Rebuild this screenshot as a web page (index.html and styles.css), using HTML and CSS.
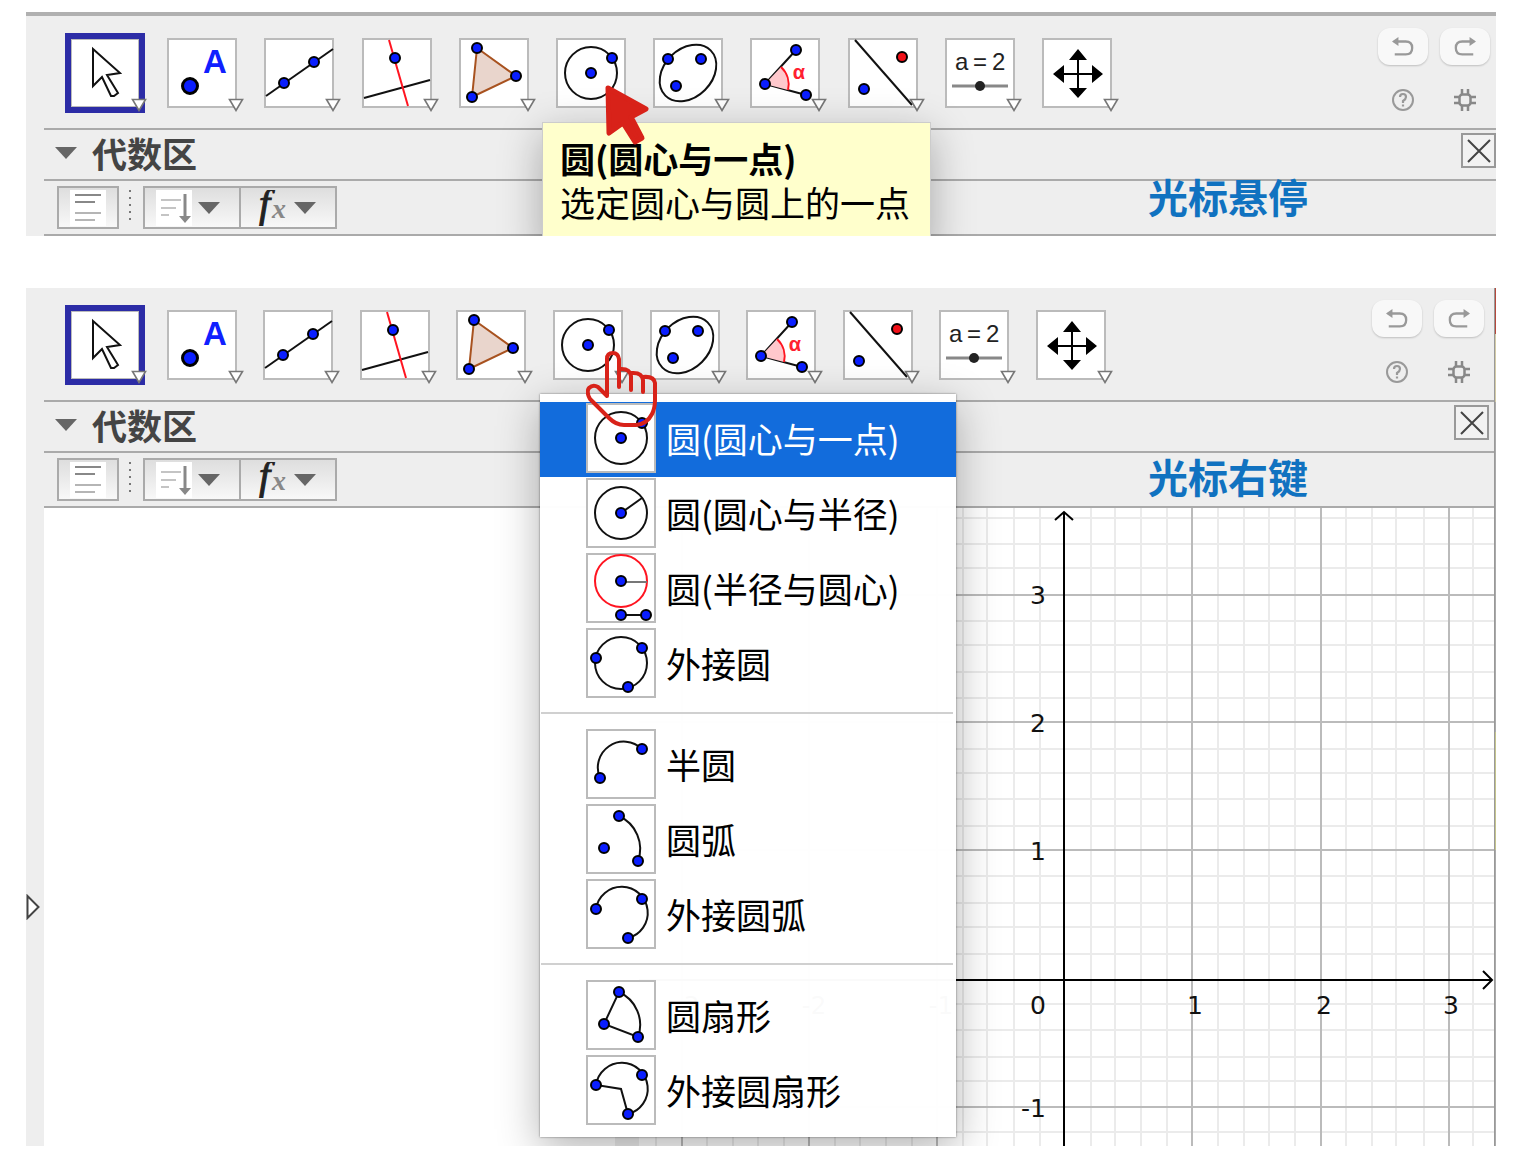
FILE: index.html
```html
<!DOCTYPE html>
<html lang="zh-CN">
<head>
<meta charset="utf-8">
<title>GeoGebra 工具栏</title>
<link rel="stylesheet" href="styles.css">
</head>
<body>
<svg class="sprite" aria-hidden="true">
  <symbol id="more" viewBox="0 0 16 14"><path d="M1.500 1.500h13L8 12.500z" fill="#fff" stroke="#777" stroke-width="1.600"/></symbol>
  <symbol id="i-move" viewBox="0 0 70 70"><path class="ln" d="M23 11 50 35 37 37 48 55 44 58H41L32 39 23 48z"/></symbol>
  <symbol id="i-point" viewBox="0 0 70 70"><circle cx="23" cy="48" r="7.500" fill="#0a1eff" stroke="#000" stroke-width="3"/><text class="glyph-a" x="48" y="35">A</text></symbol>
  <symbol id="i-line" viewBox="0 0 70 70"><path class="ln" d="M2 58 69 11"/><circle class="pt" cx="20" cy="45" r="5"/><circle class="pt" cx="50" cy="24" r="5"/></symbol>
  <symbol id="i-perp" viewBox="0 0 70 70"><path class="ln" d="M2 60 68 42"/><path class="ln red" d="M27 2 46 68"/><circle class="pt" cx="33" cy="20" r="5"/></symbol>
  <symbol id="i-poly" viewBox="0 0 70 70"><path d="M18 10 57 38 13 59z" fill="#e9d5cc" stroke="#a8521f" stroke-width="2"/><circle class="pt" cx="18" cy="10" r="5"/><circle class="pt" cx="57" cy="38" r="5"/><circle class="pt" cx="13" cy="59" r="5"/></symbol>
  <symbol id="i-circle" viewBox="0 0 70 70"><circle class="ln" cx="35" cy="35" r="26"/><circle class="pt" cx="35" cy="35" r="5"/><circle class="pt" cx="56" cy="20" r="5"/></symbol>
  <symbol id="i-conic" viewBox="0 0 70 70"><ellipse class="ln" cx="35" cy="35" rx="32" ry="24" transform="rotate(-45 35 35)"/><circle class="pt" cx="15" cy="21" r="5"/><circle class="pt" cx="48" cy="21" r="5"/><circle class="pt" cx="23" cy="48" r="5"/></symbol>
  <symbol id="i-angle" viewBox="0 0 70 70"><path class="ln" d="M46 12 15 46 56 57"/><path d="M15 46 31 29A24 24 0 0 1 38 52z" fill="#ffc8cc"/><path class="ln red" d="M31 29A24 24 0 0 1 38 52"/><circle class="pt" cx="15" cy="46" r="5"/><circle class="pt" cx="46" cy="12" r="5"/><circle class="pt" cx="56" cy="57" r="5"/><text class="glyph-alpha" x="49" y="41">α</text></symbol>
  <symbol id="i-mirror" viewBox="0 0 70 70"><path class="ln" d="M7 2 64 67"/><circle class="pt" cx="16" cy="51" r="5"/><circle class="pt pt-red" cx="54" cy="19" r="5"/></symbol>
  <symbol id="i-slider" viewBox="0 0 70 70"><text class="glyph-eq" x="10" y="32">a</text><text class="glyph-eq" x="28" y="32">=</text><text class="glyph-eq" x="47" y="32">2</text><path d="M7 48H63" stroke="#888" stroke-width="3"/><circle cx="35" cy="48" r="5" fill="#222"/></symbol>
  <symbol id="i-pan" viewBox="0 0 70 70"><path d="M36 15V57M15 36H57" stroke="#000" stroke-width="2"/><path d="M36 11 45 22H27zM36 60 45 50H27zM11 36 22 27V45zM61 36 50 27V45z"/></symbol>
  <symbol id="i-radius" viewBox="0 0 70 70"><circle class="ln" cx="35" cy="35" r="26"/><path class="ln" d="M35 35 56 20"/><circle class="pt" cx="35" cy="35" r="5"/></symbol>
  <symbol id="i-compass" viewBox="0 0 70 70"><circle class="ln red" cx="35" cy="28" r="26"/><path d="M35 29H61" stroke="#777" stroke-width="2"/><path class="ln" d="M35 62H60"/><circle class="pt" cx="35" cy="28" r="5"/><circle class="pt" cx="35" cy="62" r="5"/><circle class="pt" cx="60" cy="62" r="5"/></symbol>
  <symbol id="i-three" viewBox="0 0 70 70"><circle class="ln" cx="35" cy="35" r="26"/><circle class="pt" cx="56" cy="20" r="5"/><circle class="pt" cx="10" cy="30" r="5"/><circle class="pt" cx="42" cy="59" r="5"/></symbol>
  <symbol id="i-semi" viewBox="0 0 70 70"><path class="ln" d="M14 49A26 26 0 0 1 56 20"/><circle class="pt" cx="56" cy="20" r="5"/><circle class="pt" cx="14" cy="49" r="5"/></symbol>
  <symbol id="i-arc" viewBox="0 0 70 70"><path class="ln" d="M33 12A36 36 0 0 1 52 57"/><circle class="pt" cx="33" cy="12" r="5"/><circle class="pt" cx="18" cy="44" r="5"/><circle class="pt" cx="52" cy="57" r="5"/></symbol>
  <symbol id="i-carc" viewBox="0 0 70 70"><path class="ln" d="M10 30A26 26 0 1 1 42 59"/><circle class="pt" cx="56" cy="20" r="5"/><circle class="pt" cx="10" cy="30" r="5"/><circle class="pt" cx="42" cy="59" r="5"/></symbol>
  <symbol id="i-sector" viewBox="0 0 70 70"><path class="ln" d="M33 12A36 36 0 0 1 52 57L18 44z"/><circle class="pt" cx="33" cy="12" r="5"/><circle class="pt" cx="18" cy="44" r="5"/><circle class="pt" cx="52" cy="57" r="5"/></symbol>
  <symbol id="i-csector" viewBox="0 0 70 70"><path class="ln" d="M10 30A26 26 0 1 1 42 59L35 34z"/><circle class="pt" cx="56" cy="20" r="5"/><circle class="pt" cx="10" cy="30" r="5"/><circle class="pt" cx="42" cy="59" r="5"/></symbol>
  <symbol id="i-undo" viewBox="0 0 26 24"><path d="M3 6H16Q23 6 23 13 23 20 16 20H4" fill="none" stroke="#999" stroke-width="2.500"/><path d="M1 6 8 1V11z" fill="#999"/></symbol>
  <symbol id="i-redo" viewBox="0 0 26 24"><path d="M23 6H10Q3 6 3 13 3 20 10 20H22" fill="none" stroke="#999" stroke-width="2.500"/><path d="M25 6 18 1V11z" fill="#999"/></symbol>
  <symbol id="i-help" viewBox="0 0 24 24"><circle cx="12" cy="12" r="10" fill="none" stroke="#999" stroke-width="2"/><path d="M9 9Q9 6 12 6T15 9Q15 11 12 13V15M12 16.500V18.500" fill="none" stroke="#999" stroke-width="2.200"/></symbol>
  <symbol id="i-gear" viewBox="0 0 24 24"><rect x="6.500" y="6.500" width="11" height="11" rx="3" fill="none" stroke="#888" stroke-width="2.500"/><path d="M9 1V6M15 1V6M9 18V23M15 18V23M1 9H6M1 15H6M18 9H23M18 15H23" stroke="#888" stroke-width="2.500"/></symbol>
  <symbol id="i-close" viewBox="0 0 24 24"><path d="M1 1 23 23M23 1 1 23" stroke="#444" stroke-width="2"/></symbol>
  <symbol id="i-caret" viewBox="0 0 22 12"><path d="M0 0H22L11 12z" fill="#666"/></symbol>
  <symbol id="i-list" viewBox="0 0 36 36"><path d="M0 0H36V36H0z" fill="#fff"/><path d="M5 5H31M5 12H25" stroke="#888" stroke-width="2"/><path d="M5 23H31M5 30H25" stroke="#b5b5b5" stroke-width="2"/></symbol>
  <symbol id="i-sort" viewBox="0 0 36 36"><path d="M0 0H36V36H0z" fill="#fff"/><path d="M5 10H25M5 18H20M5 25H13" stroke="#c4c4c4" stroke-width="2"/><path d="M29 4V30" stroke="#888" stroke-width="3"/><path d="M23 26H35L29 33z" fill="#888"/></symbol>
  <symbol id="i-fx" viewBox="0 0 36 36"><text class="glyph-f" x="7" y="27">f</text><text class="glyph-x" x="20" y="28">x</text></symbol>
</svg>

<section class="panel panel-hover">
  <div class="rail"></div>
  <div class="main">
    <header class="toolbar">
      <div class="tools">
        <button class="tool selected" aria-label="移动"><svg class="pic"><use href="#i-move"/></svg><svg class="more"><use href="#more"/></svg></button>
        <button class="tool" aria-label="点"><svg class="pic"><use href="#i-point"/></svg><svg class="more"><use href="#more"/></svg></button>
        <button class="tool" aria-label="直线"><svg class="pic"><use href="#i-line"/></svg><svg class="more"><use href="#more"/></svg></button>
        <button class="tool" aria-label="垂线"><svg class="pic"><use href="#i-perp"/></svg><svg class="more"><use href="#more"/></svg></button>
        <button class="tool" aria-label="多边形"><svg class="pic"><use href="#i-poly"/></svg><svg class="more"><use href="#more"/></svg></button>
        <button class="tool" aria-label="圆"><svg class="pic"><use href="#i-circle"/></svg></button>
        <button class="tool" aria-label="椭圆"><svg class="pic"><use href="#i-conic"/></svg><svg class="more"><use href="#more"/></svg></button>
        <button class="tool" aria-label="角度"><svg class="pic"><use href="#i-angle"/></svg><svg class="more"><use href="#more"/></svg></button>
        <button class="tool" aria-label="轴对称"><svg class="pic"><use href="#i-mirror"/></svg><svg class="more"><use href="#more"/></svg></button>
        <button class="tool" aria-label="滑动条"><svg class="pic"><use href="#i-slider"/></svg><svg class="more"><use href="#more"/></svg></button>
        <button class="tool" aria-label="移动视图"><svg class="pic"><use href="#i-pan"/></svg><svg class="more"><use href="#more"/></svg></button>
      </div>
      <div class="actions">
        <button class="pill" aria-label="撤销"><svg><use href="#i-undo"/></svg></button>
        <button class="pill" aria-label="重做"><svg><use href="#i-redo"/></svg></button>
        <button class="plain" aria-label="帮助"><svg><use href="#i-help"/></svg></button>
        <button class="plain" aria-label="设置"><svg><use href="#i-gear"/></svg></button>
      </div>
    </header>
    <div class="views">
      <section class="view algebra">
        <h2 class="view-title"><svg class="caret"><use href="#i-caret"/></svg>代数区</h2>
        <div class="stylebar">
          <button class="sb" aria-label="辅助对象"><svg class="tile"><use href="#i-list"/></svg></button>
          <span class="dots"></span>
          <button class="sb wide" aria-label="排序"><svg class="tile"><use href="#i-sort"/></svg><svg class="caret"><use href="#i-caret"/></svg></button>
          <button class="sb wide" aria-label="描述"><svg class="tile"><use href="#i-fx"/></svg><svg class="caret"><use href="#i-caret"/></svg></button>
        </div>
      </section>
      <section class="view graphics">
        <h2 class="view-title"><svg class="caret"><use href="#i-caret"/></svg>绘图区<button class="close" aria-label="关闭"><svg><use href="#i-close"/></svg></button></h2>
        <div class="stylebar">
          <button class="sb wide" aria-label="坐标轴"></button>
          <button class="sb wide" aria-label="网格"></button>
          <button class="sb wide" aria-label="捕捉"></button>
        </div>
      </section>
    </div>
  </div>
  <div class="tooltip" role="tooltip"><strong>圆(圆心与一点)</strong><span>选定圆心与圆上的一点</span></div>
  <svg class="pointer" viewBox="0 0 48 62"><path d="M5 4 43 25 28 33 39 54 32 58 20 39 6 49z" fill="#d82219" stroke="#d82219" stroke-width="5" stroke-linejoin="round"/></svg>
  <p class="caption">光标悬停</p>
</section>

<section class="panel panel-menu">
  <div class="rail"><button class="expand" aria-label="展开"><svg viewBox="0 0 14 26"><path d="M1.500 2V24L12.500 13z" fill="#fff" stroke="#444" stroke-width="2"/></svg></button></div>
  <div class="main">
    <header class="toolbar">
      <div class="tools">
        <button class="tool selected" aria-label="移动"><svg class="pic"><use href="#i-move"/></svg><svg class="more"><use href="#more"/></svg></button>
        <button class="tool" aria-label="点"><svg class="pic"><use href="#i-point"/></svg><svg class="more"><use href="#more"/></svg></button>
        <button class="tool" aria-label="直线"><svg class="pic"><use href="#i-line"/></svg><svg class="more"><use href="#more"/></svg></button>
        <button class="tool" aria-label="垂线"><svg class="pic"><use href="#i-perp"/></svg><svg class="more"><use href="#more"/></svg></button>
        <button class="tool" aria-label="多边形"><svg class="pic"><use href="#i-poly"/></svg><svg class="more"><use href="#more"/></svg></button>
        <button class="tool" aria-label="圆"><svg class="pic"><use href="#i-circle"/></svg><svg class="more"><use href="#more"/></svg></button>
        <button class="tool" aria-label="椭圆"><svg class="pic"><use href="#i-conic"/></svg><svg class="more"><use href="#more"/></svg></button>
        <button class="tool" aria-label="角度"><svg class="pic"><use href="#i-angle"/></svg><svg class="more"><use href="#more"/></svg></button>
        <button class="tool" aria-label="轴对称"><svg class="pic"><use href="#i-mirror"/></svg><svg class="more"><use href="#more"/></svg></button>
        <button class="tool" aria-label="滑动条"><svg class="pic"><use href="#i-slider"/></svg><svg class="more"><use href="#more"/></svg></button>
        <button class="tool" aria-label="移动视图"><svg class="pic"><use href="#i-pan"/></svg><svg class="more"><use href="#more"/></svg></button>
      </div>
      <div class="actions">
        <button class="pill" aria-label="撤销"><svg><use href="#i-undo"/></svg></button>
        <button class="pill" aria-label="重做"><svg><use href="#i-redo"/></svg></button>
        <button class="plain" aria-label="帮助"><svg><use href="#i-help"/></svg></button>
        <button class="plain" aria-label="设置"><svg><use href="#i-gear"/></svg></button>
      </div>
    </header>
    <div class="views">
      <section class="view algebra">
        <h2 class="view-title"><svg class="caret"><use href="#i-caret"/></svg>代数区</h2>
        <div class="stylebar">
          <button class="sb" aria-label="辅助对象"><svg class="tile"><use href="#i-list"/></svg></button>
          <span class="dots"></span>
          <button class="sb wide" aria-label="排序"><svg class="tile"><use href="#i-sort"/></svg><svg class="caret"><use href="#i-caret"/></svg></button>
          <button class="sb wide" aria-label="描述"><svg class="tile"><use href="#i-fx"/></svg><svg class="caret"><use href="#i-caret"/></svg></button>
        </div>
        <div class="pane pane-algebra"></div>
      </section>
      <section class="view graphics">
        <h2 class="view-title"><svg class="caret"><use href="#i-caret"/></svg>绘图区<button class="close" aria-label="关闭"><svg><use href="#i-close"/></svg></button></h2>
        <div class="stylebar"></div>
        <div class="pane pane-graph">
          <svg class="graph" width="860" height="638" viewBox="0 0 860 638">
            <path class="minor" d="M22 0V638M73 0V638M99 0V638M124 0V638M150 0V638M201 0V638M226 0V638M252 0V638M278 0V638M329 0V638M353 0V638M380 0V638M406 0V638M457 0V638M481 0V638M507 0V638M533 0V638M584 0V638M610 0V638M635 0V638M661 0V638M712 0V638M738 0V638M762 0V638M790 0V638M839 0V638"/>
            <path class="minor" d="M0 10H860M0 36H860M0 60H860M0 113H860M0 137H860M0 164H860M0 190H860M0 241H860M0 265H860M0 291H860M0 318H860M0 368H860M0 395H860M0 419H860M0 446H860M0 496H860M0 522H860M0 549H860M0 573H860M0 624H860"/>
            <path class="major" d="M48 0V638M175 0V638M303 0V638M558 0V638M687 0V638M815 0V638M0 87H860M0 214H860M0 342H860M0 599H860"/>
            <path class="axis" d="M0 472H857M430 5V638"/>
            <path class="axis" d="M421 12 430 4 439 12M849 463 858 472 849 481"/>
            <g class="num">
              <text x="53" y="506">-3</text><text x="180" y="506">-2</text><text x="307" y="506">-1</text>
              <text x="404" y="506">0</text><text x="561" y="506">1</text><text x="690" y="506">2</text><text x="817" y="506">3</text>
            </g>
            <g class="num num-y">
              <text x="412" y="96">3</text><text x="412" y="224">2</text><text x="412" y="352">1</text><text x="412" y="609">-1</text>
            </g>
          </svg>
        </div>
      </section>
    </div>
  </div>
  <div class="edge"></div>
  <div class="menu" role="menu">
    <button class="item active" role="menuitem"><svg class="pic"><use href="#i-circle"/></svg>圆(圆心与一点)</button>
    <button class="item" role="menuitem"><svg class="pic"><use href="#i-radius"/></svg>圆(圆心与半径)</button>
    <button class="item" role="menuitem"><svg class="pic"><use href="#i-compass"/></svg>圆(半径与圆心)</button>
    <button class="item" role="menuitem"><svg class="pic"><use href="#i-three"/></svg>外接圆</button>
    <hr>
    <button class="item" role="menuitem"><svg class="pic"><use href="#i-semi"/></svg>半圆</button>
    <button class="item" role="menuitem"><svg class="pic"><use href="#i-arc"/></svg>圆弧</button>
    <button class="item" role="menuitem"><svg class="pic"><use href="#i-carc"/></svg>外接圆弧</button>
    <hr>
    <button class="item" role="menuitem"><svg class="pic"><use href="#i-sector"/></svg>圆扇形</button>
    <button class="item" role="menuitem"><svg class="pic"><use href="#i-csector"/></svg>外接圆扇形</button>
  </div>
  <svg class="hand" viewBox="0 0 72 78"><path d="M33 37V9Q32 3 27 3 21 3 21 9V46L12 37Q7 34 3 38 0 42 4 49L23 68Q30 75 38 75H50Q61 74 66 64 69 58 69 50V33Q68 26 57 27M33 19Q44 18 45 26V40M45 23Q56 22 57 30V42" fill="none" stroke="#d82219" stroke-width="4" stroke-linecap="round" stroke-linejoin="round"/></svg>
  <p class="caption">光标右键</p>
</section>
</body>
</html>
```
FILE: styles.css
```css
* { box-sizing: border-box; }
body {
  margin: 0;
  padding: 12px 18px 14px 26px;
  display: flex;
  flex-direction: column;
  gap: 52px;
  background: #fff;
  font-family: "Noto Sans CJK SC", "Liberation Sans", sans-serif;
}
button { margin: 0; padding: 0; border: 0; background: none; font: inherit; color: inherit; }
svg { display: block; }
.sprite { position: absolute; width: 0; height: 0; }
symbol { overflow: visible; }

.ln { fill: none; stroke: #111; stroke-width: 2; }
.ln.red { stroke: #ff1420; }
.pt { fill: #0a1eff; stroke: #000; stroke-width: 2; }
.pt-red { fill: #f01018; }
.glyph-a { font: 700 33px "Liberation Sans", sans-serif; fill: #1020ff; text-anchor: middle; }
.glyph-alpha { font: 700 20px "Liberation Sans", sans-serif; fill: #ff2030; text-anchor: middle; }
.glyph-eq { font: 24px "Liberation Sans", sans-serif; fill: #222; }
.glyph-f { font: italic 40px "Liberation Serif", serif; fill: #222; stroke: #222; stroke-width: 1; }
.glyph-x { font: italic 700 28px "Liberation Serif", serif; fill: #888; }

.panel { position: relative; display: flex; overflow: hidden; background: #eee; }
.panel-hover { border-top: 4px solid #b0b0b0; }
.rail { flex: none; width: 18px; }
.main { flex: 1; min-width: 0; }
.edge {
  flex: none;
  width: 2px;
  border-left: 1px solid #999;
  background: linear-gradient(#b5483c 46px, #d3cba6 46px, #d3cba6 114px, #aaa 114px, #aaa 444px, #c4c48c 444px, #c4c48c 562px, #aaa 562px);
}

.toolbar {
  display: flex;
  height: 114px;
  padding: 17px 6px 0 21px;
  border-bottom: 2px solid #aaa;
}
.panel-menu .toolbar { padding-right: 10px; }
.tools { flex: 1; display: flex; justify-content: space-between; margin-right: 259px; }
.tool { position: relative; width: 82px; height: 80px; padding: 5px; }
.tool .more { position: absolute; left: 66px; top: 65px; width: 16px; height: 14px; }
.pic { flex: none; width: 70px; height: 70px; background: #fff; box-shadow: inset 0 0 0 2px #bbb; }
.tool.selected .pic { outline: 6px solid #2c2ca6; outline-offset: -1px; }

.actions { display: grid; grid-template-columns: 50px 50px; column-gap: 12px; align-content: start; margin-top: -5px; }
.pill { height: 37px; border-radius: 12px; background: #f8f8f8; box-shadow: 0 1px 2px rgba(0, 0, 0, .2); }
.pill svg { width: 24px; height: 22px; margin: auto; }
.plain { height: 70px; }
.plain svg { width: 24px; height: 24px; margin: auto; }

.views { display: flex; }
.view { display: flex; flex-direction: column; }
.algebra { flex: none; width: 41%; }
.graphics { flex: 1; min-width: 0; }
.view-title {
  display: flex;
  align-items: center;
  height: 51px;
  margin: 0;
  padding: 0 0 3px 11px;
  border-bottom: 2px solid #aaa;
  font-size: 35px;
  line-height: 46px;
  font-weight: 700;
  color: #444;
}
.caret { flex: none; width: 22px; height: 12px; }
.view-title .caret { margin-right: 15px; }
.close {
  align-self: flex-start;
  width: 35px;
  height: 35px;
  margin: 3px 0 0 auto;
  border: 2px solid #999;
  background: #f2f2f2;
}
.panel-menu .close { margin-right: 5px; }
.close svg { width: 24px; height: 24px; margin: auto; }
.stylebar { display: flex; height: 55px; padding: 5px 13px; border-bottom: 2px solid #aaa; }
.graphics .stylebar { padding-left: 2px; }
.sb {
  display: flex;
  align-items: center;
  justify-content: center;
  gap: 6px;
  width: 62px;
  height: 43px;
  border: 2px solid #aaa;
  background: linear-gradient(#dedede, #f8f8f8);
}
.sb.wide { width: 98px; justify-content: flex-start; padding-left: 11px; }
.sb.wide + .sb.wide { margin-left: -2px; }
.tile { flex: none; width: 36px; height: 36px; }
.dots { width: 2px; height: 30px; margin: 4px 12px 0 10px; background: repeating-linear-gradient(#777 0 2px, transparent 2px 7px); }

.pane { min-height: 638px; background: #fff; }
.pane-algebra { margin-right: 24px; }
.pane-graph { display: flex; justify-content: flex-end; overflow: hidden; }
.graph { flex: none; }
.minor { stroke: #ebebeb; stroke-width: 2; }
.major { stroke: #bbb; stroke-width: 2; }
.axis { fill: none; stroke: #000; stroke-width: 2; }
.num { font: 25px "DejaVu Sans", sans-serif; fill: #111; text-anchor: middle; }
.num-y { text-anchor: end; }

.expand { display: block; margin-top: 606px; }
.expand svg { width: 14px; height: 26px; }

.tooltip {
  position: absolute;
  left: 516px;
  top: 106px;
  width: 389px;
  height: 130px;
  padding: 13px 17px;
  display: flex;
  flex-direction: column;
  border: 1px solid #ccc;
  background: #ffffcc;
  box-shadow: 0 12px 40px rgba(0, 0, 0, .3);
  font-size: 35px;
  line-height: 44px;
  white-space: nowrap;
}
.pointer { position: absolute; left: 577px; top: 68px; width: 48px; height: 62px; }
.caption {
  position: absolute;
  right: 188px;
  top: 156px;
  margin: 0;
  font-size: 40px;
  line-height: 48px;
  font-weight: 700;
  color: #1072c0;
}
.panel-menu .caption { top: 164px; }

.menu {
  position: absolute;
  left: 514px;
  top: 106px;
  width: 416px;
  padding: 8px 0;
  background: rgba(255, 255, 255, .98);
  box-shadow: 0 0 2px rgba(0, 0, 0, .5), 0 12px 40px rgba(0, 0, 0, .3);
}
.item {
  display: flex;
  align-items: center;
  gap: 10px;
  width: 100%;
  height: 75px;
  padding: 0 0 3px 46px;
  font-size: 35px;
  line-height: 48px;
  color: #000;
}
.item.active { background: #126cdc; color: #fff; }
.menu hr { height: 2px; margin: 10px 3px 14px 1px; border: 0; background: #d0d0d0; }
.hand { position: absolute; left: 560px; top: 62px; width: 72px; height: 78px; }
```
